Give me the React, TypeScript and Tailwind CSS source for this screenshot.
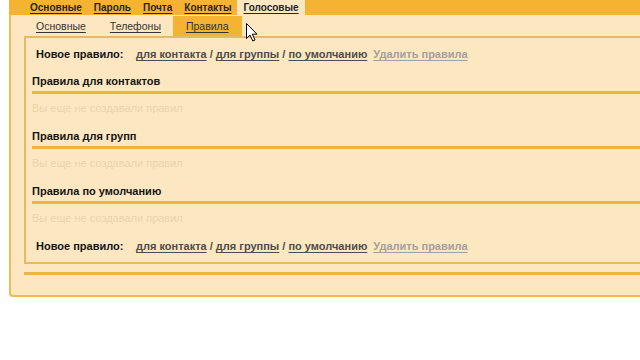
import React from 'react';

const topTabs = ['Основные', 'Пароль', 'Почта', 'Контакты', 'Голосовые'];
const subTabs = ['Основные', 'Телефоны', 'Правила'];

function NewRuleRow() {
  return (
    <div className="flex h-[18px] items-center pl-[4px] text-[11px] leading-[18px]">
      <span className="w-[100px] font-bold text-[#141414]">Новое правило:</span>
      <span className="font-bold text-[#4d4d4d]">
        <a className="underline underline-offset-2">для контакта</a>
        <span> / </span>
        <a className="underline underline-offset-2">для группы</a>
        <span> / </span>
        <a className="underline underline-offset-2">по умолчанию</a>
      </span>
      <a className="ml-[6px] font-bold text-[#a0a0a0] underline underline-offset-2">Удалить правила</a>
    </div>
  );
}

function Section({ title, first }: { title: string; first?: boolean }) {
  return (
    <div className={first ? 'mt-[10px]' : 'mt-[12px]'}>
      <div className="box-content h-[16px] border-b-[3px] border-[#f0b43a] pb-[2px] text-[11px] font-bold leading-[16px] text-[#141414]">
        {title}
      </div>
      <div className="mt-[6px] h-[16px] text-[11px] leading-[16px] text-[#ead3ab]">Вы еще не создавали правил</div>
    </div>
  );
}

export default function App() {
  return (
    <div
      className="relative h-[360px] w-[640px] overflow-hidden bg-white pl-[9px]"
      style={{ fontFamily: '"Liberation Sans", Arial, sans-serif' }}
    >
      <div className="flex h-[15px] bg-[#f4b330] pl-[15px] text-[10px] font-bold leading-[15px] text-[#262626]">
        {topTabs.map((t) => (
          <div key={t} className={`px-[6px] ${t === 'Голосовые' ? 'bg-[#fde7c1]' : ''}`}>
            <span className="underline underline-offset-2">{t}</span>
          </div>
        ))}
      </div>

      <div className="h-[282px] rounded-bl-[4px] border-b-2 border-l-2 border-[#eebc4f] bg-[#fde7c1] pl-[13px]">
        <div className="flex h-[21px] pt-[1px] text-[10.5px] leading-[20px] text-[#333]">
          {subTabs.map((t) => (
            <div
              key={t}
              className={t === 'Правила' ? 'bg-[#f4b330] px-[13px]' : 'px-[12px]'}
            >
              <span className="underline underline-offset-2">{t}</span>
            </div>
          ))}
        </div>

        <div className="h-[228px] border-y-2 border-l-2 border-[#e3bb62] pl-[6px] pt-[7px]">
          <NewRuleRow />
          <Section title="Правила для контактов" first />
          <Section title="Правила для групп" />
          <Section title="Правила по умолчанию" />
          <div className="mt-[11px]">
            <NewRuleRow />
          </div>
        </div>

        <div className="mt-[8px] h-[3px] bg-[#edb443]" />
      </div>

      <svg className="absolute left-[246px] top-[23px]" width="12" height="19" viewBox="0 0 12 19">
        <path d="M0.5 0.5 L0.5 15.5 L4 12 L6.8 18 L9 17 L6.3 11.2 L11 11.2 Z" fill="#fff" stroke="#000" strokeWidth="1" />
      </svg>
    </div>
  );
}
